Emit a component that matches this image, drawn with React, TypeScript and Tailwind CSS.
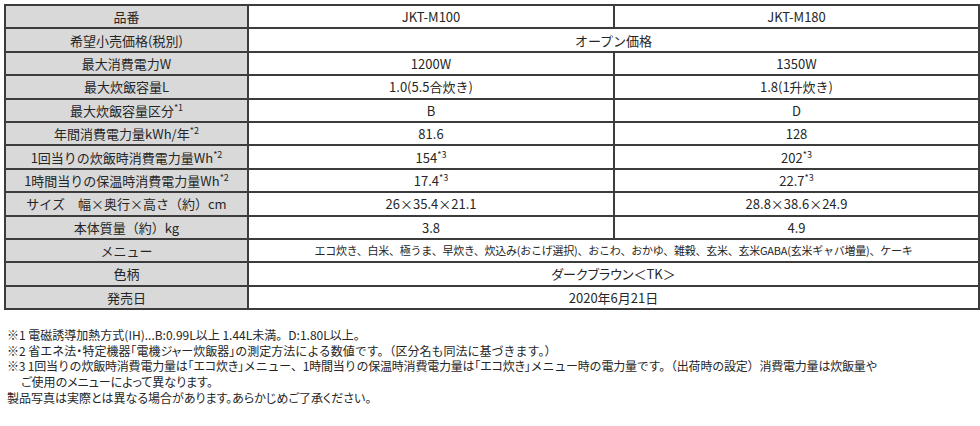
import React from "react";

const Sup = ({ n }: { n: string }) => (
  <span className="relative -top-[5px] text-[9px] leading-none">*{n}</span>
);

const P = ({ children }: { children: React.ReactNode }) => (
  <span className="[font-feature-settings:'palt']">{children}</span>
);

type Row = {
  label: React.ReactNode;
  a?: React.ReactNode;
  b?: React.ReactNode;
  merged?: React.ReactNode;
  cls?: string;
};

const rows: Row[] = [
  { label: "品番", a: "JKT-M100", b: "JKT-M180" },
  { label: "希望小売価格(税別)", merged: "オープン価格" },
  { label: "最大消費電力W", a: "1200W", b: "1350W" },
  { label: "最大炊飯容量L", a: "1.0(5.5合炊き)", b: "1.8(1升炊き)" },
  { label: <>最大炊飯容量区分<Sup n="1" /></>, a: "B", b: "D" },
  { label: <>年間消費電力量kWh/年<Sup n="2" /></>, a: "81.6", b: "128" },
  {
    label: <>1回当りの炊飯時消費電力量Wh<Sup n="2" /></>,
    a: <>154<Sup n="3" /></>,
    b: <>202<Sup n="3" /></>,
  },
  {
    label: <>1時間当りの保温時消費電力量Wh<Sup n="2" /></>,
    a: <>17.4<Sup n="3" /></>,
    b: <>22.7<Sup n="3" /></>,
  },
  { label: "サイズ　幅×奥行×高さ（約）cm", a: "26×35.4×21.1", b: "28.8×38.6×24.9" },
  { label: "本体質量（約）kg", a: "3.8", b: "4.9" },
  {
    label: "メニュー",
    merged:
      "エコ炊き、白米、極うま、早炊き、炊込み(おこげ選択)、おこわ、おかゆ、雑穀、玄米、玄米GABA(玄米ギャバ増量)、ケーキ",
    cls: "text-[11px] tracking-[-0.25px]",
  },
  {
    label: "色柄",
    merged: "ダークブラウン＜TK＞",
    cls: "[font-feature-settings:'palt']",
  },
  { label: "発売日", merged: "2020年6月21日" },
];

const cell = "border-2 border-[#3c3c3c] text-center whitespace-nowrap p-0";

export default function App() {
  return (
    <div
      className="w-[980px] h-[426px] bg-white text-[#262626] p-1"
      style={{ fontFamily: '"Noto Sans CJK JP", "Noto Sans", sans-serif' }}
    >
      <table className="w-[974px] table-fixed border-collapse border-2 border-[#3c3c3c] text-[13px] leading-none">
        <colgroup>
          <col className="w-[243px]" />
          <col className="w-[366px]" />
          <col className="w-[365px]" />
        </colgroup>
        <tbody>
          {rows.map((r, i) => (
            <tr key={i} className="h-[23.4px]">
              <td className={`${cell} bg-[#d9d9d9]`}>{r.label}</td>
              {r.merged !== undefined ? (
                <td colSpan={2} className={`${cell} ${r.cls ?? ""}`}>
                  {r.merged}
                </td>
              ) : (
                <>
                  <td className={cell}>{r.a}</td>
                  <td className={cell}>{r.b}</td>
                </>
              )}
            </tr>
          ))}
        </tbody>
      </table>
      <div className="mt-[17px] pl-[3px] text-[12px] leading-[15.7px]">
        <p>※1 電磁誘導加熱方式(IH)...B:0.99L以上 1.44L未満。D:1.80L以上。</p>
        <p>
          ※2 省エネ法<P>・</P>特定機器<P>「電機ジャー炊飯器」</P>
          の測定方法による数値です。（区分名も同法に基づきます。）
        </p>
        <p className="tracking-[-0.2px]">
          ※3 1回当りの炊飯時消費電力量は<P>「エコ炊き」</P>メニュー、1時間当りの保温時消費電力量は
          <P>「エコ炊き」</P>メニュー時の電力量です。（出荷時の設定）消費電力量は炊飯量や
        </p>
        <p className="pl-[14px] [font-feature-settings:'palt']">ご使用のメニューによって異なります。</p>
        <p className="[font-feature-settings:'palt']">
          製品写真は実際とは異なる場合があります。あらかじめご了承ください。
        </p>
      </div>
    </div>
  );
}
